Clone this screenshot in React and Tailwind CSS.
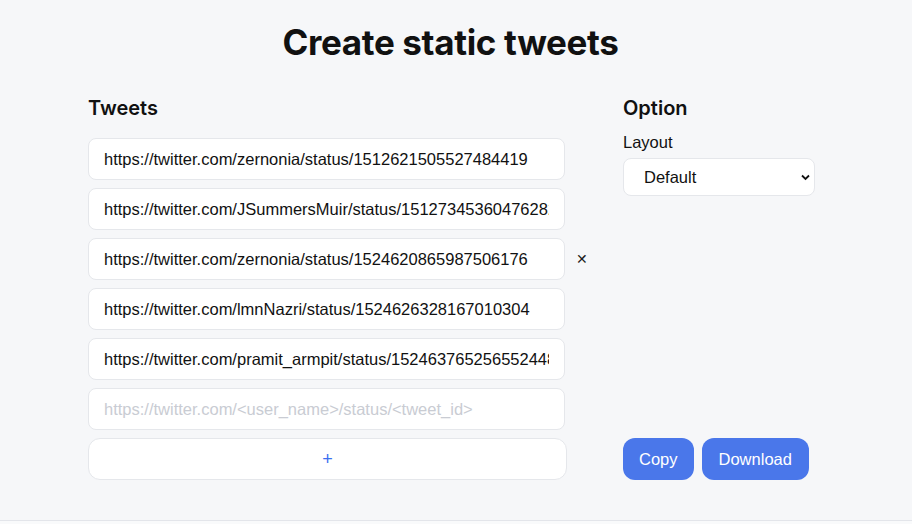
import React from "react";

const tweets = [
  "https://twitter.com/zernonia/status/1512621505527484419",
  "https://twitter.com/JSummersMuir/status/1512734536047628288",
  "https://twitter.com/zernonia/status/1524620865987506176",
  "https://twitter.com/lmnNazri/status/1524626328167010304",
  "https://twitter.com/pramit_armpit/status/1524637652565524480",
];

export default function App() {
  return (
    <div className="w-[912px] h-[524px] bg-[#f6f7f9] overflow-hidden flex flex-col font-['Liberation_Sans',Arial,sans-serif] text-[#111]">
      <div className="flex-1">
        <h1 className="text-center pr-[11px] font-['Inter',sans-serif] font-bold text-[35px] leading-[44px] pt-[20px] tracking-[-0.35px]">
          Create static tweets
        </h1>
        <div className="flex mt-[30px] pl-[88px]">
          <div className="w-[535px] flex flex-col">
            <h2 className="font-['Inter',sans-serif] font-semibold text-[20px] leading-[28px] mb-[16px]">Tweets</h2>
            <div className="flex flex-col gap-[8px]">
              {tweets.map((t, i) => (
                <div key={i} className="flex items-center">
                  <input
                    readOnly
                    value={t}
                    className="w-[477px] h-[42px] rounded-lg border border-[#e5e7eb] bg-white px-[15px] text-[16.5px] text-[#111] outline-none"
                  />
                  {i === 2 && (
                    <span className="ml-[11px] text-[14px] leading-none text-[#222]">✕</span>
                  )}
                </div>
              ))}
              <input
                readOnly
                placeholder="https://twitter.com/<user_name>/status/<tweet_id>"
                className="w-[477px] h-[42px] rounded-lg border border-[#e5e7eb] bg-white px-[15px] text-[16.5px] outline-none placeholder:text-[#c9ccd3]"
              />
              <button className="w-[479px] h-[42px] rounded-xl border border-[#e5e7eb] bg-white text-[#3b6ff0] text-[18px] leading-none">
                +
              </button>
            </div>
          </div>
          <div className="w-[192px] flex flex-col">
            <h2 className="font-['Inter',sans-serif] font-semibold text-[20px] leading-[28px] mb-[8px]">Option</h2>
            <label className="text-[16.5px] leading-[24px] mb-[4px]">Layout</label>
            <div className="relative w-[192px] h-[38px] rounded-lg border border-[#e5e7eb] bg-white flex items-center pl-[20px] text-[16.5px]">
              Default
              <svg className="absolute right-[4px] top-[15px]" width="9" height="7" viewBox="0 0 9 7">
                <path d="M1 1.5 L4.5 5 L8 1.5" fill="none" stroke="#111" strokeWidth="1.8" />
              </svg>
            </div>
            <div className="flex-1" />
            <div className="flex gap-[8px]">
              <button className="h-[42px] px-[16px] rounded-xl bg-[#4a77ea] text-white text-[16.5px]">Copy</button>
              <button className="h-[42px] px-[17px] rounded-xl bg-[#4a77ea] text-white text-[16.5px]">Download</button>
            </div>
          </div>
        </div>
      </div>
      <div className="h-[4px] border-t border-[#e3e5ea] bg-[#f9fafb]" />
    </div>
  );
}
